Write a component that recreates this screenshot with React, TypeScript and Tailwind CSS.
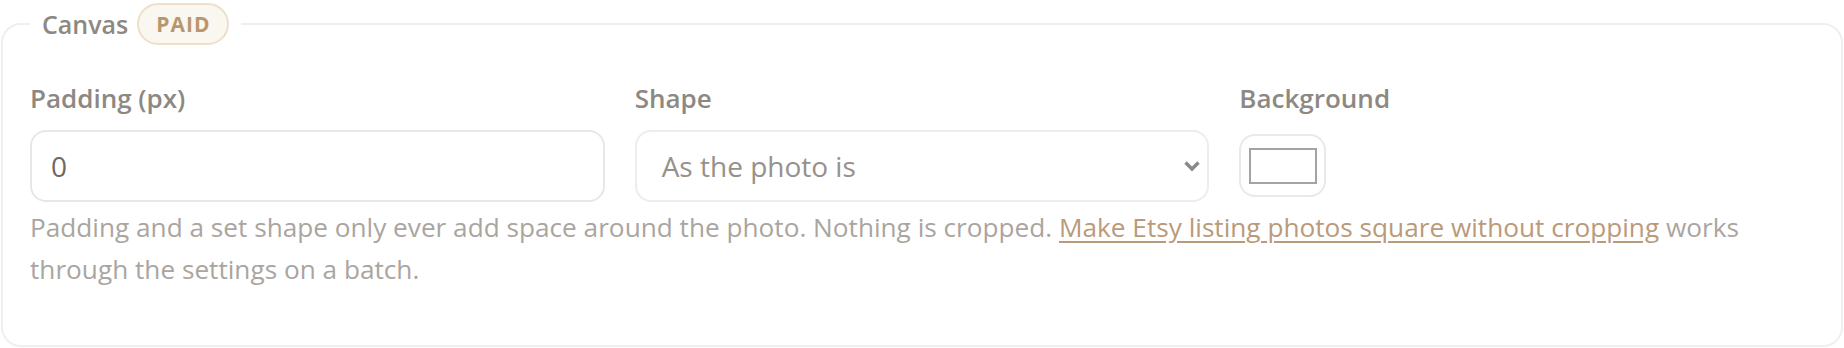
import React from "react";

export default function App() {
  return (
    <div className="w-[1844px] h-[348px] bg-white font-['Open_Sans',sans-serif]">
      <fieldset className="ml-[1px] w-[1842px] h-[347px] rounded-[20px] border-2 border-[#f1efeb] px-[27px] pt-0 pb-0">
        <legend className="h-[48px] px-[12px]">
          <div className="flex h-[48px] items-center gap-[9px]">
            <span className="text-[25px] font-semibold leading-none text-[#8d8882]">Canvas</span>
            <span className="flex h-[42px] items-center rounded-full border-2 border-[#eedfcb] bg-[#faf6f0] px-[17px] text-[21px] font-bold leading-none tracking-[1px] text-[#b8976f]">
              PAID
            </span>
          </div>
        </legend>
        <div className="mt-[31px] grid grid-cols-3 gap-x-[30px]">
          <div className="flex flex-col">
            <label className="mb-[13px] text-[26px] font-semibold leading-[38px] text-[#8d8882]">Padding (px)</label>
            <div className="flex h-[72px] items-center rounded-[16px] border-2 border-[#e9e7e2] pl-[19px] text-[28px] text-[#6d6863]">
              0
            </div>
          </div>
          <div className="flex flex-col">
            <label className="mb-[13px] text-[26px] font-semibold leading-[38px] text-[#8d8882]">Shape</label>
            <div className="relative flex h-[72px] items-center rounded-[16px] border-2 border-[#efede9] pl-[25px] text-[28px] text-[#96918b]">
              <span>As the photo is</span>
              <svg className="absolute right-[6px] top-[28px]" width="18" height="12" viewBox="0 0 18 12">
                <path d="M2.5 2.5 L9 9 L15.5 2.5" fill="none" stroke="#8a8a8a" strokeWidth="3.4" />
              </svg>
            </div>
          </div>
          <div className="flex flex-col">
            <label className="mb-[13px] text-[26px] font-semibold leading-[38px] text-[#8d8882]">Background</label>
            <div className="mt-[4px] flex h-[63px] w-[87px] items-center justify-center rounded-[16px] border-2 border-[#ebe9e4] bg-white">
              <div className="h-[36px] w-[68px] border-2 border-[#a3a3a3] bg-white" />
            </div>
          </div>
        </div>
        <p className="mt-[4px] text-[26.2px] leading-[42px] text-[#aaa59f]">
          Padding and a set shape only ever add space around the photo. Nothing is cropped.{" "}
          <a className="text-[#b99a7b] underline underline-offset-[4px]" href="#">
            Make Etsy listing photos square without cropping
          </a>{" "}
          works through the settings on a batch.
        </p>
      </fieldset>
    </div>
  );
}
